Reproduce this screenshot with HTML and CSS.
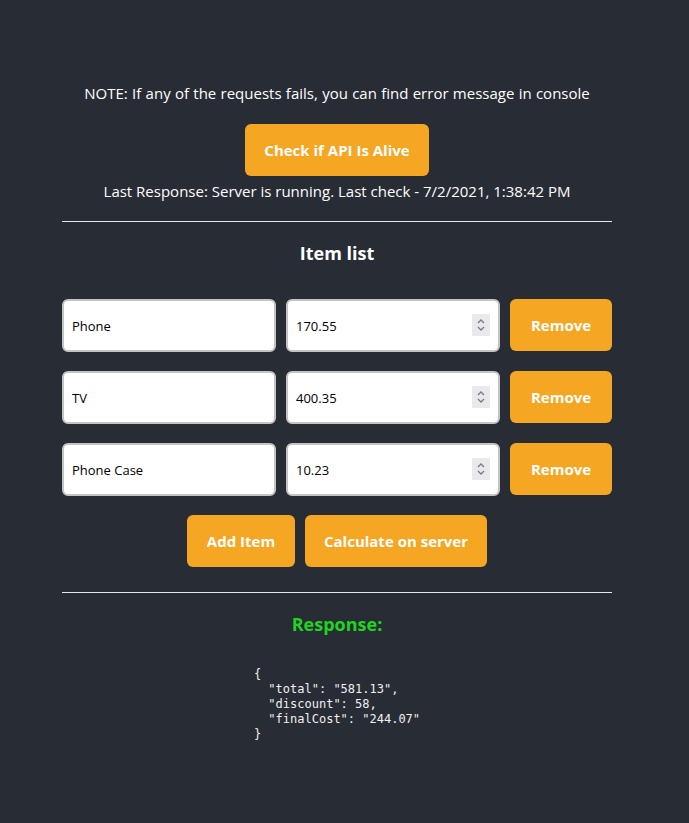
FILE: index.html
```html
<!DOCTYPE html>
<html>
<head>
<meta charset="utf-8">
<link rel="stylesheet" href="styles.css">
</head>
<body>
<div class="app">
  <p class="note">NOTE: If any of the requests fails, you can find error message in console</p>
  <button class="btn btn-check">Check if API Is Alive</button>
  <p class="last">Last Response: Server is running. Last check - 7/2/2021, 1:38:42 PM</p>
  <hr class="rule">
  <h2 class="title">Item list</h2>
  <div class="items">
    <div class="row">
      <input class="field" type="text" value="Phone">
      <div class="num-wrap">
        <input class="field" type="number" value="170.55">
        <span class="spin"><svg width="8" height="14" viewBox="0 0 8 14"><path d="M1 5 L4 2 L7 5 M1 9 L4 12 L7 9" fill="none" stroke="#7a7a7a" stroke-width="1.3"/></svg></span>
      </div>
      <button class="btn btn-remove">Remove</button>
    </div>
    <div class="row">
      <input class="field" type="text" value="TV">
      <div class="num-wrap">
        <input class="field" type="number" value="400.35">
        <span class="spin"><svg width="8" height="14" viewBox="0 0 8 14"><path d="M1 5 L4 2 L7 5 M1 9 L4 12 L7 9" fill="none" stroke="#7a7a7a" stroke-width="1.3"/></svg></span>
      </div>
      <button class="btn btn-remove">Remove</button>
    </div>
    <div class="row">
      <input class="field" type="text" value="Phone Case">
      <div class="num-wrap">
        <input class="field" type="number" value="10.23">
        <span class="spin"><svg width="8" height="14" viewBox="0 0 8 14"><path d="M1 5 L4 2 L7 5 M1 9 L4 12 L7 9" fill="none" stroke="#7a7a7a" stroke-width="1.3"/></svg></span>
      </div>
      <button class="btn btn-remove">Remove</button>
    </div>
  </div>
  <div class="actions">
    <button class="btn btn-add">Add Item</button>
    <button class="btn btn-calc">Calculate on server</button>
  </div>
  <hr class="rule rule-2">
  <h2 class="response">Response:</h2>
  <pre class="json">{
  "total": "581.13",
  "discount": 58,
  "finalCost": "244.07"
}</pre>
</div>
</body>
</html>
```
FILE: styles.css
```css
html, body {
  margin: 0;
  padding: 0;
  background: #282c34;
}
body {
  font-family: "Open Sans", "Noto Sans", sans-serif;
  color: #ffffff;
  min-height: 823px;
  width: 674px;
}
.app {
  width: 550px;
  margin: 0 auto;
  padding-top: 82px;
  display: flex;
  flex-direction: column;
  align-items: center;
}
.note {
  margin: 0;
  font-size: 15px;
  line-height: 22px;
  word-spacing: 0.4px;
}
.btn {
  background: #f5a623;
  color: #fff;
  border: none;
  border-radius: 6px;
  font-family: "Open Sans", "Noto Sans", sans-serif;
  font-weight: 700;
  font-size: 15px;
  height: 52px;
  cursor: pointer;
}
.btn-check {
  margin-top: 20px;
  width: 184px;
}
.last {
  margin: 3px 0 0;
  font-size: 15px;
  line-height: 24px;
}
.rule {
  width: 100%;
  margin: 18px 0 0;
  border: none;
  border-top: 1px solid #e8e8e8;
  height: 0;
}
.title {
  margin: 18px 0 0;
  font-size: 18px;
  line-height: 26px;
  font-weight: 700;
}
.items {
  width: 100%;
  margin-top: 33px;
  display: flex;
  flex-direction: column;
  gap: 19px;
}
.row {
  display: flex;
  gap: 10px;
  align-items: flex-start;
}
.num-wrap {
  position: relative;
  width: 214px;
  height: 53px;
}
.field {
  box-sizing: border-box;
  width: 214px;
  height: 53px;
  border: 2px solid #c4c4c4;
  border-radius: 6px;
  background: #fff;
  padding: 0 8px;
  font-family: "Open Sans", "Noto Sans", sans-serif;
  font-size: 13px;
  color: #000;
  margin: 0;
}
.field::-webkit-inner-spin-button,
.field::-webkit-outer-spin-button {
  -webkit-appearance: none;
  margin: 0;
}
.spin {
  position: absolute;
  right: 10px;
  top: 15px;
  width: 18px;
  height: 22px;
  background: #e9e9ed;
  display: flex;
  align-items: center;
  justify-content: center;
}
.btn-remove {
  width: 102px;
}
.actions {
  margin-top: 19px;
  display: flex;
  gap: 10px;
}
.btn-add { width: 108px; }
.btn-calc { width: 182px; }
.rule-2 {
  margin-top: 25px;
}
.response {
  margin: 18px 0 0;
  font-size: 18px;
  line-height: 26px;
  color: #21d321;
  font-weight: 700;
}
.json {
  margin: 30px 0 0;
  font-family: "DejaVu Sans Mono", monospace;
  font-size: 12px;
  line-height: 15px;
  color: #f0f0f0;
  text-align: left;
}
```
